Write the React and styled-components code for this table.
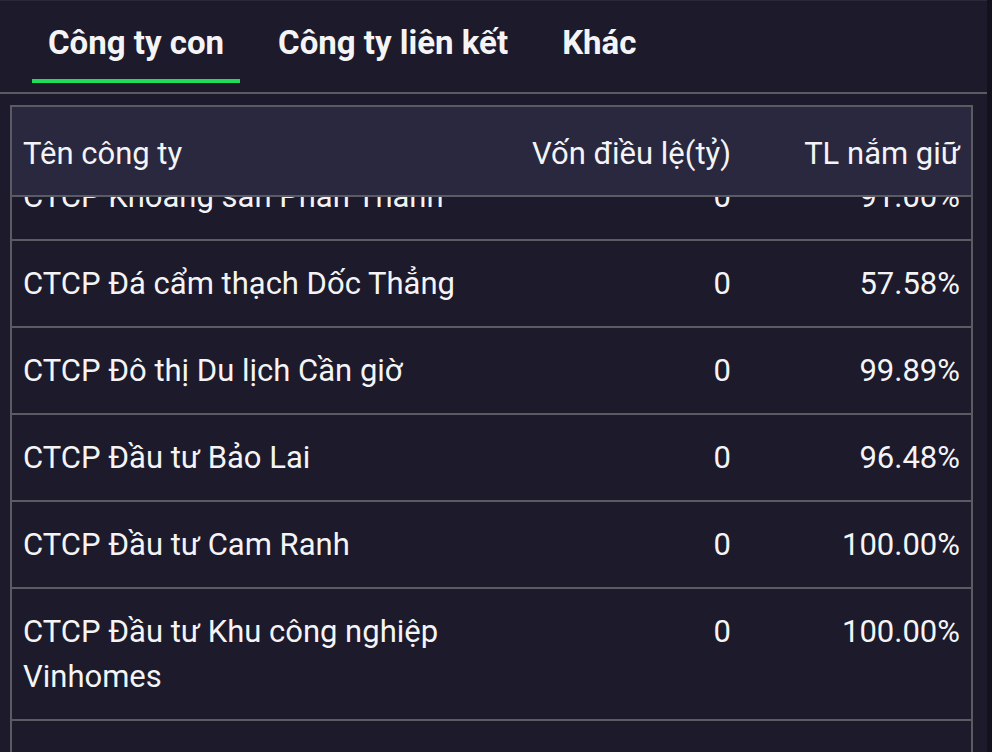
import React, { useLayoutEffect, useRef, useState } from "react";
import styled, { createGlobalStyle } from "styled-components";

const GlobalStyle = createGlobalStyle`
  html, body {
    margin: 0;
    padding: 0;
    background: #13111d;
    font-family: Roboto, "Noto Sans", "Liberation Sans", sans-serif;
  }
  * { box-sizing: border-box; }
`;

const Panel = styled.div`
  width: 987px;
  height: 100vh;
  display: flex;
  flex-direction: column;
  background-color: #1c1a2b;
  border-top: 1px solid #2a2839;
  overflow: hidden;
`;

const TabBar = styled.div`
  display: flex;
  gap: 22px;
  padding: 0 0 9px 32px;
  border-bottom: 2px solid #5b5b63;
`;

const Tab = styled.button`
  height: 82px;
  padding: 5px 16px 0;
  display: flex;
  align-items: center;
  background: none;
  border: none;
  border-bottom: 4px solid ${(props) => (props.active ? "#1fdc5a" : "transparent")};
  color: #f4f4f6;
  font-family: inherit;
  font-size: 33px;
  font-weight: 700;
  cursor: pointer;
`;

const Body = styled.div`
  flex: 1;
  min-height: 0;
  display: flex;
  padding: 11px 14px 0 10px;
`;

const TableBox = styled.div`
  flex: 1;
  display: flex;
  flex-direction: column;
  border: 2px solid #5b5b63;
  border-bottom: none;
`;

const Scroller = styled.div`
  flex: 1;
  min-height: 0;
  overflow: hidden;
`;

const Row = styled.div`
  display: grid;
  grid-template-columns: 1fr 233px 229px;
  border-bottom: 2px solid #5b5b63;
  color: #f4f4f6;
  font-size: 31px;
  line-height: 45px;
`;

const HeadRow = styled(Row)`
  position: sticky;
  top: 0;
  z-index: 1;
  height: 90px;
  padding-top: 5px;
  align-items: center;
  background-color: #29283f;
`;

const Cell = styled.div`
  padding: 20px 11px;
  text-align: ${(props) => (props.right ? "right" : "left")};
`;

const HeadCell = styled(Cell)`
  padding: 0 11px;
`;

const companies = [
  { name: "CTCP Khoáng sản Phan Thanh", capital: "0", share: "91.00%" },
  { name: "CTCP Đá cẩm thạch Dốc Thẳng", capital: "0", share: "57.58%" },
  { name: "CTCP Đô thị Du lịch Cần giờ", capital: "0", share: "99.89%" },
  { name: "CTCP Đầu tư Bảo Lai", capital: "0", share: "96.48%" },
  { name: "CTCP Đầu tư Cam Ranh", capital: "0", share: "100.00%" },
  { name: "CTCP Đầu tư Khu công nghiệp Vinhomes", capital: "0", share: "100.00%" },
  { name: "CTCP Địa Hưng", capital: "0", share: "97.70%" },
  { name: "CTCP Đầu tư và Kinh doanh Bất động sản Hà Thành", capital: "0", share: "99.00%" },
];

const tabs = ["Công ty con", "Công ty liên kết", "Khác"];

export default function App() {
  const [active, setActive] = useState(0);
  const scrollRef = useRef(null);

  // the list is shown scrolled a little, first row half under the header
  useLayoutEffect(() => {
    if (scrollRef.current) scrollRef.current.scrollTop = 43;
  }, []);

  return (
    <>
      <GlobalStyle />
      <Panel>
        <TabBar>
          {tabs.map((t, i) => (
            <Tab key={t} active={i === active} onClick={() => setActive(i)}>
              {t}
            </Tab>
          ))}
        </TabBar>
        <Body>
          <TableBox>
            <Scroller ref={scrollRef}>
              <HeadRow>
                <HeadCell>Tên công ty</HeadCell>
                <HeadCell right>Vốn điều lệ(tỷ)</HeadCell>
                <HeadCell right>TL nắm giữ</HeadCell>
              </HeadRow>
              {companies.map((c) => (
                <Row key={c.name}>
                  <Cell>{c.name}</Cell>
                  <Cell right>{c.capital}</Cell>
                  <Cell right>{c.share}</Cell>
                </Row>
              ))}
            </Scroller>
          </TableBox>
        </Body>
      </Panel>
    </>
  );
}
